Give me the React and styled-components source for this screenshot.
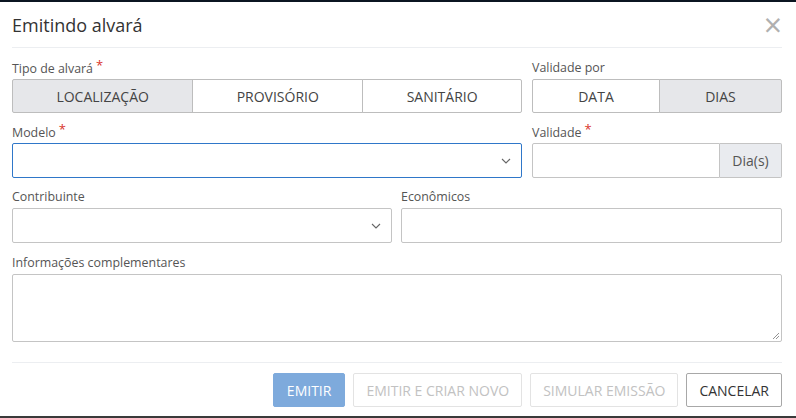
import React from "react";
import styled, { createGlobalStyle } from "styled-components";

const Global = createGlobalStyle`
  html, body {
    margin: 0;
    padding: 0;
    background: #0b1521;
  }
  body {
    font-family: "Open Sans", "Liberation Sans", sans-serif;
    color: #333;
  }
`;

const Page = styled.div`
  width: 796px;
  height: 418px;
  padding-top: 2px;
  box-sizing: border-box;
  background: #0b1521;
  overflow: hidden;
`;

const Modal = styled.div`
  background: #fff;
  height: 414px;
  padding: 0 14px 0 12px;
  box-sizing: border-box;
`;

const Header = styled.div`
  display: flex;
  align-items: center;
  justify-content: space-between;
  height: 45px;
  border-bottom: 1px solid #eceef1;
`;

const Title = styled.h4`
  margin: 0;
  font-size: 18px;
  font-weight: 400;
  color: #333;
  padding-top: 1px;
`;

const Close = styled.span`
  color: #b0b0b0;
  font-size: 32px;
  font-weight: 400;
  line-height: 1;
  display: flex;
  align-items: center;
`;

const Body = styled.div`
  padding-top: 12px;
  display: flex;
  flex-direction: column;
  gap: 11px;
`;

const Row = styled.div`
  display: grid;
  grid-template-columns: ${(p) => p.cols};
  column-gap: ${(p) => p.gap || "10px"};
  margin-top: ${(p) => p.mt || "0"};
`;

const Field = styled.div`
  display: flex;
  flex-direction: column;
`;

const Label = styled.label`
  font-size: 12.4px;
  color: #555;
  line-height: 16px;
  height: 17px;
  margin-bottom: 2px;
  span {
    color: #d9342b;
    font-size: 13px;
    margin-left: 3px;
    position: relative;
    top: -3px;
  }
`;

const Segment = styled.div`
  display: flex;
  height: 34px;
  box-sizing: border-box;
`;

const SegBtn = styled.div`
  flex: 1 1 auto;
  display: flex;
  align-items: center;
  justify-content: center;
  font-size: 14px;
  color: #444;
  border: 1px solid #bdbdbd;
  margin-left: -1px;
  background: ${(p) => (p.active ? "#e6e7ea" : "#fff")};
  &:first-child {
    margin-left: 0;
    border-radius: 2px 0 0 2px;
  }
  &:last-child {
    border-radius: 0 2px 2px 0;
  }
`;

const Input = styled.div`
  height: ${(p) => p.h || "35px"};
  box-sizing: border-box;
  border: 1px solid ${(p) => (p.focus ? "#2f77c9" : "#c4c4c4")};
  border-radius: ${(p) => (p.joined ? "2px 0 0 2px" : "2px")};
  background: #fff;
  display: flex;
  align-items: center;
  justify-content: flex-end;
  padding-right: 10px;
  flex: 1 0 auto;
  position: relative;
`;

const Group = styled.div`
  display: flex;
  height: 35px;
`;

const Addon = styled.div`
  width: 62px;
  box-sizing: border-box;
  border: 1px solid #c4c4c4;
  border-left: none;
  border-radius: 0 2px 2px 0;
  background: #e9ebef;
  display: flex;
  align-items: center;
  justify-content: center;
  font-size: 14px;
  color: #555;
`;

const Grip = styled.svg`
  position: absolute;
  right: 1px;
  bottom: 1px;
`;

const Footer = styled.div`
  margin-top: 20px;
  border-top: 1px solid #eceef1;
  padding-top: 10px;
  display: flex;
  justify-content: flex-end;
  gap: 8px;
`;

const Button = styled.div`
  height: 34px;
  box-sizing: border-box;
  padding: 0 ${(p) => p.px || "12px"};
  display: flex;
  align-items: center;
  font-size: 14px;
  border-radius: 2px;
  border: 1px solid
    ${(p) => (p.variant === "primary" ? "#7eaadc" : p.variant === "muted" ? "#e3e3e3" : "#a8a8a8")};
  background: ${(p) => (p.variant === "primary" ? "#7eaadc" : "#fff")};
  color: ${(p) => (p.variant === "primary" ? "#fff" : p.variant === "muted" ? "#c2c2c2" : "#333")};
`;

const BottomEdge = styled.div`
  height: 2px;
  background: #3a3a3a;
`;

function Chevron() {
  return (
    <svg width="10" height="6" viewBox="0 0 10 6">
      <path d="M1 1l4 4 4-4" fill="none" stroke="#666" strokeWidth="1.1" />
    </svg>
  );
}

export default function App() {
  return (
    <Page>
      <Global />
      <Modal>
        <Header>
          <Title>Emitindo alvará</Title>
          <Close>×</Close>
        </Header>
        <Body>
          <Row cols="510px 250px">
            <Field>
              <Label>
                Tipo de alvará<span>*</span>
              </Label>
              <Segment>
                <SegBtn active>LOCALIZAÇÃO</SegBtn>
                <SegBtn>PROVISÓRIO</SegBtn>
                <SegBtn>SANITÁRIO</SegBtn>
              </Segment>
            </Field>
            <Field>
              <Label>Validade por</Label>
              <Segment>
                <SegBtn>DATA</SegBtn>
                <SegBtn active>DIAS</SegBtn>
              </Segment>
            </Field>
          </Row>
          <Row cols="510px 250px">
            <Field>
              <Label>
                Modelo<span>*</span>
              </Label>
              <Input focus>
                <Chevron />
              </Input>
            </Field>
            <Field>
              <Label>
                Validade<span>*</span>
              </Label>
              <Group>
                <Input joined />
                <Addon>Dia(s)</Addon>
              </Group>
            </Field>
          </Row>
          <Row cols="380px 381px" gap="9px">
            <Field>
              <Label>Contribuinte</Label>
              <Input>
                <Chevron />
              </Input>
            </Field>
            <Field>
              <Label>Econômicos</Label>
              <Input />
            </Field>
          </Row>
          <Row cols="770px" mt="1px">
            <Field>
              <Label>Informações complementares</Label>
              <Input h="68px">
                <Grip width="9" height="9" viewBox="0 0 9 9">
                  <path d="M8 2L2 8M8 5L5 8" stroke="#888" strokeWidth="0.9" />
                </Grip>
              </Input>
            </Field>
          </Row>
        </Body>
        <Footer>
          <Button variant="primary" px="13px">EMITIR</Button>
          <Button variant="muted">EMITIR E CRIAR NOVO</Button>
          <Button variant="muted">SIMULAR EMISSÃO</Button>
          <Button>CANCELAR</Button>
        </Footer>
      </Modal>
      <BottomEdge />
    </Page>
  );
}
